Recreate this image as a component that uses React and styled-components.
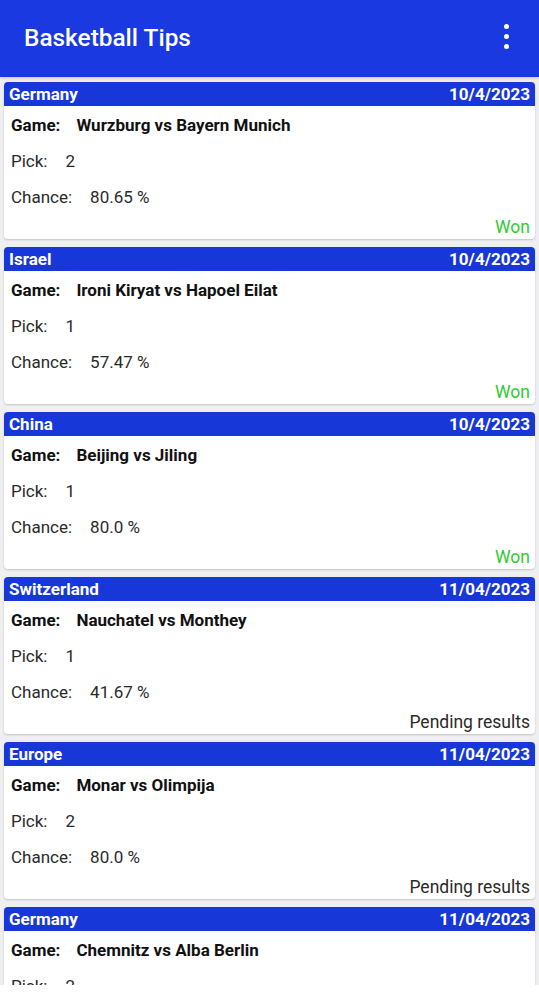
import React from 'react';
import styled, { createGlobalStyle } from 'styled-components';

const Global = createGlobalStyle`
  html, body {
    margin: 0;
    padding: 0;
    background: #ffffff;
  }
  body {
    font-family: Roboto, "Liberation Sans", Arial, sans-serif;
  }
`;

const Screen = styled.div`
  height: 100vh;
  display: flex;
  flex-direction: column;
  overflow: hidden;
  background: #ffffff;
`;

const AppBar = styled.header`
  flex: none;
  height: 77px;
  background: #1b39e0;
  display: flex;
  align-items: center;
  justify-content: space-between;
  padding: 0 30px 0 24px;
  box-shadow: 0 1px 3px rgba(0, 0, 0, 0.2);
  position: relative;
  z-index: 1;
`;

const Title = styled.h1`
  margin: 0;
  color: #ffffff;
  font-size: 24.4px;
  font-weight: 500;
  margin-top: -3px;
`;

const MenuButton = styled.div`
  display: flex;
  flex-direction: column;
  gap: 5px;
  margin-top: -4px;
`;

const Dot = styled.span`
  width: 5px;
  height: 5px;
  border-radius: 50%;
  background: #ffffff;
`;

const List = styled.main`
  flex: 1;
  min-height: 0;
  overflow: hidden;
  background: #efeff1;
  padding: 5px 4px 0;
  display: flex;
  flex-direction: column;
  gap: 8px;
  margin-bottom: 15px;
`;

const Card = styled.section`
  flex: none;
  height: 157px;
  background: #ffffff;
  border-radius: 4px;
  box-shadow: 0 1px 2px rgba(0, 0, 0, 0.18);
  display: flex;
  flex-direction: column;
`;

const CardHead = styled.div`
  height: 24px;
  background: #1737d8;
  border-radius: 4px 4px 0 0;
  display: flex;
  align-items: center;
  justify-content: space-between;
  padding: 0 5px;
  color: #ffffff;
  font-size: 17px;
  font-weight: 700;
`;

const Body = styled.div`
  flex: 1;
  display: flex;
  flex-direction: column;
  padding: 1px 5px 0 7px;
`;

const Row = styled.div`
  height: 36px;
  display: flex;
  align-items: center;
  gap: ${p => (p.$bold ? '16px' : '18px')};
  font-size: 17px;
  font-weight: ${p => (p.$bold ? 700 : 400)};
  color: ${p => (p.$bold ? '#111111' : '#2a2a2a')};
`;

const Status = styled.div`
  margin-top: auto;
  height: 24px;
  display: flex;
  align-items: center;
  justify-content: flex-end;
  font-size: 17.5px;
  color: ${p => (p.$won ? '#2ecc2e' : '#2a2a2a')};
`;

const tips = [
  { country: 'Germany', date: '10/4/2023', game: 'Wurzburg vs Bayern Munich', pick: '2', chance: '80.65 %', status: 'Won' },
  { country: 'Israel', date: '10/4/2023', game: 'Ironi Kiryat vs Hapoel Eilat', pick: '1', chance: '57.47 %', status: 'Won' },
  { country: 'China', date: '10/4/2023', game: 'Beijing vs Jiling', pick: '1', chance: '80.0 %', status: 'Won' },
  { country: 'Switzerland', date: '11/04/2023', game: 'Nauchatel vs Monthey', pick: '1', chance: '41.67 %', status: 'Pending results' },
  { country: 'Europe', date: '11/04/2023', game: 'Monar vs Olimpija', pick: '2', chance: '80.0 %', status: 'Pending results' },
  { country: 'Germany', date: '11/04/2023', game: 'Chemnitz vs Alba Berlin', pick: '2', chance: '—', status: 'Pending results' },
];

function TipCard({ tip }) {
  return (
    <Card>
      <CardHead>
        <span>{tip.country}</span>
        <span>{tip.date}</span>
      </CardHead>
      <Body>
        <Row $bold>
          <span>Game:</span>
          <span>{tip.game}</span>
        </Row>
        <Row>
          <span>Pick:</span>
          <span>{tip.pick}</span>
        </Row>
        <Row>
          <span>Chance:</span>
          <span>{tip.chance}</span>
        </Row>
        <Status $won={tip.status === 'Won'}>{tip.status}</Status>
      </Body>
    </Card>
  );
}

export default function App() {
  return (
    <Screen>
      <Global />
      <AppBar>
        <Title>Basketball Tips</Title>
        <MenuButton>
          <Dot />
          <Dot />
          <Dot />
        </MenuButton>
      </AppBar>
      <List>
        {tips.map((tip, i) => (
          <TipCard key={i} tip={tip} />
        ))}
      </List>
    </Screen>
  );
}
